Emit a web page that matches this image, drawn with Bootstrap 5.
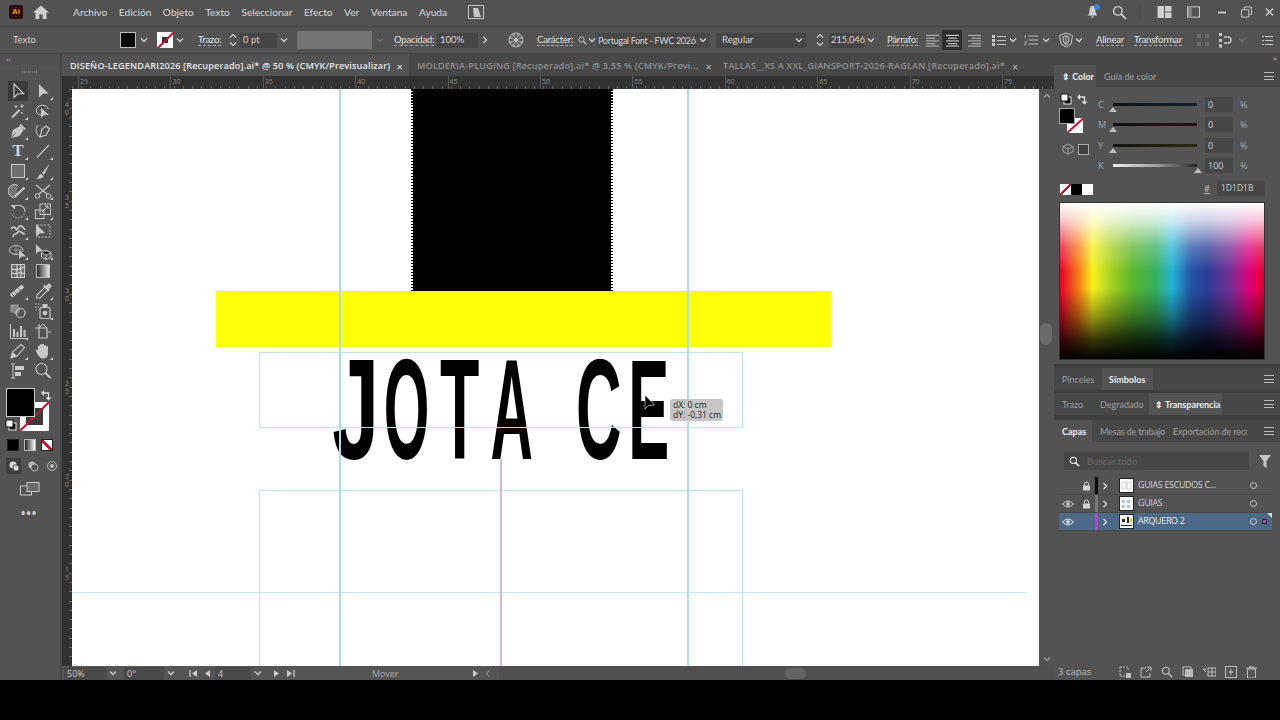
<!DOCTYPE html>
<html lang="es">
<head>
<meta charset="utf-8">
<title>Illustrator</title>
<link href="https://cdn.jsdelivr.net/npm/bootstrap@5.3.0/dist/css/bootstrap.min.css" rel="stylesheet">
<style>
html,body{margin:0;height:720px;overflow:hidden;background:#000}
body{font-family:"Open Sans","Noto Sans",sans-serif;color:#d2d2d2;font-size:10px;line-height:1}
svg{display:block;flex:none}
.ai-app{width:1280px;height:680px;background:#535353;display:flex;flex-direction:column}
.ai-foot{height:40px;background:#000}
/* menu */
.ai-menu{height:27px;flex:none;display:flex;align-items:center;border-bottom:1px solid #454545;background:#525252;position:relative;padding-bottom:2px}
.ai-logo{width:14px;height:14px;margin-left:9px;background:#2e0a04;border-radius:2px;color:#ff9a00;font:700 8px/14px "Liberation Sans",sans-serif;text-align:center;flex:none}
.ai-home{margin-left:10px;color:#d0d0d0}
.ai-menu-list{display:flex;gap:11.5px;margin-left:24px;font:400 10.2px/1 Lato,sans-serif;color:#d8d8d8;white-space:nowrap}
.ai-menu-ico{margin-left:21px}
.ai-menu-right{margin-left:auto;display:flex;align-items:center;color:#d0d0d0}
.ai-bell{position:relative}
.ai-dot{position:absolute;right:-2px;top:-1px;width:6px;height:6px;border-radius:50%;background:#3a86d8}
.mr-6{margin-right:6px}.mr-12{margin-right:12px}.mr-13{margin-right:13px}.mr-14{margin-right:14px}.mr-15{margin-right:15px}.mr-17{margin-right:17px}.mr-18{margin-right:18px}
.ai-sep{width:1px;height:20px;background:#484848}
/* options: the bar is one row of fixed tracks */
.ai-opts{height:27px;flex:none;display:grid;align-items:center;justify-items:start;padding-left:13px;grid-template-columns:107px 19px 18px 18px 23px 30px 12px 39px 18px 78px 19px 43px 43px 28px 29px 41px 9px 10px 119px 99px 14px 37px 21px 35px 20px 22px 28px 16px 16px 17px 17px 16px 22px 38px 62px 22px 19px 25px 18px;background:#535353;border-bottom:1px solid #3f3f3f;white-space:nowrap;font:400 9.5px/1 Lato,sans-serif}
.ai-lbl{color:#e0e0e0;border-bottom:1px dashed #aaa;line-height:11px;letter-spacing:-.2px}
.ai-box{height:15px;background:#454545;color:#d6d6d6;display:flex;align-items:center;padding-left:3px;flex:none}
.ai-chev{width:10px;height:10px;color:#d0d0d0}
.ai-swf{width:16px;height:16px;background:#000;border:1px solid #bdbdbd}
.ai-sws{width:16px;height:16px;background:#fff;position:relative;overflow:hidden}
.ai-sws::before{content:"";position:absolute;left:5px;top:5px;width:6px;height:6px;background:#333}
.ai-sws::after{content:"";position:absolute;left:-3px;top:7px;width:24px;height:2px;background:#c4122f;transform:rotate(-45deg)}
.x4{margin-left:4px}.x2{margin-left:2px}.x6{margin-left:6px}.x13{margin-left:13px}.x10{margin-left:10px}.x3{margin-left:3px}.x5{margin-left:5px}
.w36{width:37px}.w42{width:41px}.w134{width:113px;padding-left:1px;justify-content:space-between;padding-right:2px;letter-spacing:-.3px;font-size:9px;background:#484848}.w90{width:90px;padding-left:6px;justify-content:space-between;padding-right:2px}.w33{width:35px;padding-left:2px;letter-spacing:-.2px}
.ai-gray{width:75px;height:18px;background:#757575;flex:none}
.ai-align{width:20px;height:20px;display:flex;align-items:center;justify-content:center;color:#c6c6c6}
.ai-align-on{background:#2f2f2f;color:#eee}
.ai-faint{color:#707070}
/* work */
.ai-work{flex:1;display:flex;min-height:0}
.ai-tools{width:62px;flex:none;background:#535353;border-right:2px solid #454545;position:relative}
.ai-tools-head{height:11px;font-size:8px;color:#bbb;padding:1px 0 0 6px;background:#505050}
.ai-grip{height:14px;margin:0 4px;display:flex;align-items:center;justify-content:center}
.ai-grip i{display:block;width:16px;height:2px;background:repeating-linear-gradient(90deg,#777 0 1px,transparent 1px 2px)}
.ai-tgrid{display:grid;grid-template-columns:20px 20px;grid-auto-rows:20px;column-gap:5px;margin:2px 0 0 8px;color:#c8c8c8}
.ai-tcell{display:flex;align-items:center;justify-content:center;position:relative}
.ai-t-on{background:#3a3a3a;border-radius:1px}
.ai-t-flyout::after{content:"";position:absolute;right:0;bottom:1px;border-left:3px solid transparent;border-bottom:3px solid #cfcfcf}
.ai-tT{font:700 17px/20px "Liberation Serif",serif;color:#d4d4d4}
.ai-colorwell{position:relative;height:45px;margin-top:7px}
.ai-fw-stroke{position:absolute;left:20px;top:14px;width:29px;height:29px;background:#fff;overflow:hidden}
.ai-fw-stroke::before{content:"";position:absolute;left:6px;top:6px;width:17px;height:17px;background:#3a3a3a}
.ai-fw-stroke::after{content:"";position:absolute;left:-6px;top:13px;width:42px;height:2px;background:#c4122f;transform:rotate(-45deg)}
.ai-fw-fill{position:absolute;left:6px;top:0;width:29px;height:29px;background:#000;border:1px solid #c9c9c9}
.ai-fw-swap{position:absolute;left:40px;top:1px;color:#ddd}
.ai-fw-def{position:absolute;left:5px;top:31px;color:#eee}
.ai-modes{display:flex;gap:5px;margin:6px 0 0 7px}
.ai-mode{width:12px;height:12px;border:1px solid #222}
.ai-m-k{background:#000}.ai-m-g{background:linear-gradient(90deg,#222,#fff);border-color:#bbb}
.ai-m-n{background:linear-gradient(45deg,#fff 40%,#c4122f 40% 60%,#fff 60%);border-color:#222}
.ai-views{display:flex;gap:4px;margin:7px 0 0 6px;color:#bbb}
.ai-vw{width:16px;height:16px;display:flex;align-items:center;justify-content:center}
.ai-vw-on{background:#3f3f3f;color:#ddd}
.ai-scr{margin:8px 0 0 20px;color:#c8c8c8}
.ai-more{text-align:center;margin-top:12px;color:#ccc;font-weight:700;font-size:12px;letter-spacing:1px;padding-right:2px}
/* center */
.ai-center{width:992px;flex:none;display:flex;flex-direction:column}
.ai-tabs{height:22px;flex:none;display:flex;background:#474747;font-weight:600;font-size:9.1px;white-space:nowrap}
.ai-tab{display:flex;align-items:center;color:#909090;letter-spacing:.18px;padding-top:2px}
.ai-tab b{font-weight:400;margin-left:7px;color:#bbb;font-size:11px}
.ai-tab-on{background:#535353;color:#e6e6e6;width:347px;padding-left:8px;letter-spacing:.15px}
.ai-tab-on b{color:#eee;margin-left:6px}
.ai-tab-2{margin-left:8px}.ai-tab-3{margin-left:11px}
.ai-hruler{height:13px;flex:none;background:#323232;display:flex;position:relative;padding-left:18px;color:#8c8c8c;font-size:7px}
.ai-hruler::after{content:"";position:absolute;left:10px;right:0;bottom:0;height:3px;background:repeating-linear-gradient(90deg,#666 0 1px,transparent 1px 9.24px)}
.ai-hruler span{flex:0 0 92.4px;padding-top:2px;position:relative}
.ai-hruler span::before{content:"";position:absolute;left:-2px;top:0;bottom:0;width:1px;background:#5a5a5a}
.ai-body{flex:1;display:flex;min-height:0}
.ai-vruler{width:10px;flex:none;background:#323232;color:#8c8c8c;font-size:7px;line-height:7.5px;text-align:center;padding-top:12px;position:relative;overflow:hidden}
.ai-vruler span{display:block;height:93px}
.ai-vruler::after{content:"";position:absolute;top:0;bottom:0;right:0;width:3px;background:repeating-linear-gradient(#666 0 1px,transparent 1px 9.3px)}
.ai-canvas{width:967px;flex:none;background:#fff;position:relative;overflow:hidden}
.ai-black{position:absolute;left:340px;top:0;width:200px;height:202px;background:#000}
.ai-black::before,.ai-black::after{content:"";position:absolute;top:0;bottom:0;width:2px;background:repeating-linear-gradient(#000 0 1.5px,#fff 1.5px 3px)}
.ai-black::before{left:-1px}.ai-black::after{right:-1px}
.ai-yellow{position:absolute;left:144px;top:202px;width:615px;height:56px;background:#ffff0a}
.ai-jc{position:absolute;left:258px;top:236px;height:170px;display:flex;font:700 143px/170px "Liberation Sans",sans-serif;color:#000}
.ai-sl{width:52px;display:flex;justify-content:center;flex:none}
.ai-sl span{display:block;flex:none}
.l-j{transform:scaleX(.59)}.l-o{transform:scaleX(.41)}.l-t{transform:scaleX(.45)}.l-a{transform:scaleX(.41)}.l-c{transform:scaleX(.44)}.l-e{transform:scaleX(.43)}
.s-o{margin-left:-1px}.s-t{margin-left:.5px}.s-c{margin-left:35.5px}.s-e{margin-left:-2px}
.ai-gv{position:absolute;top:0;bottom:0;width:2px;background:#a9dfea}
.g1{left:267px}.g2{left:615px}
.ai-gh{position:absolute;left:0;top:503px;width:955px;height:1px;background:#c3e7ee}
.ai-grect{position:absolute;left:187px;width:484px;border:1px solid #bfe3ea}
.r1{top:263px;height:76px}.r2{top:401px;height:190px}
.ai-gm{position:absolute;left:428px;top:369px;bottom:0;width:2px;background:#d9b3d9}
.ai-tip{position:absolute;left:598px;top:310px;width:53px;height:22px;background:#c6c6c6;border-radius:3px;color:#222;font-size:8.5px;line-height:10px;padding:1px 3px;white-space:nowrap}
.ai-cur{position:absolute;left:572px;top:306px}
.ai-vscroll{width:15px;flex:none;background:#535353;position:relative;display:flex;flex-direction:column;align-items:center;justify-content:space-between;color:#999;padding:2px 0}
.ai-vthumb{position:absolute;left:1px;top:234px;width:12px;height:22px;background:#6b6b6b;border-radius:6px}
.ai-status{height:14px;flex:none;display:flex;align-items:center;background:#555;padding-left:2px;color:#c8c8c8;font-size:9px;white-space:nowrap}
.ai-sbox{height:13px;background:#4a4a4a;display:flex;align-items:center;padding:1px 0 0 3px;flex:none}
.w42b{width:42px}.w40b{width:40px}.w32b{width:36px}
.ai-mover{margin-left:77px;width:100px;color:#a8a8a8;padding-top:1px}
.ai-hscroll{margin-left:8px;flex:1;height:100%;position:relative;background:#505050}
.ai-hthumb{position:absolute;left:286px;top:2px;width:21px;height:11px;background:#636363;border-radius:5px}
/* panels */
.ai-panels{width:226px;flex:none;background:#3f3f3f;display:flex;flex-direction:column}
.ai-pstrip{height:11px;flex:none;background:#474747;color:#bbb;font-size:8px;text-align:right;padding-right:3px}
.ai-ptabs{display:flex;height:22px;flex:none;background:#474747;align-items:stretch;font:400 9px/1 Lato,sans-serif;color:#a0a0a0;white-space:nowrap;position:relative}
.ai-ptab{display:flex;align-items:center;padding-left:8px;flex:none}
.ai-ptab-on{background:#535353;color:#ededed;font-weight:700}
.t42{width:42px}.t67{width:67px}.t48{width:48px}.t51{width:51px;padding-left:7px}.t46{width:46px}.t49{width:49px;padding-left:0}.t73{width:73px;padding-left:6px}.t38{width:38px}.t71{width:71px;letter-spacing:-.15px}.t82{width:82px;padding-left:10px;letter-spacing:-.1px}
.ai-ham{position:absolute;right:6px;top:7px;width:10px;height:8px;border-top:1px solid #bbb;border-bottom:1px solid #bbb}
.ai-ham::after{content:"";display:block;height:1px;background:#bbb;margin-top:2.5px}
.ai-pcolor{height:278px;flex:none;background:#535353;position:relative;border-bottom:1px solid #3a3a3a}
.ai-cfill{position:absolute;left:5px;top:21px;width:16px;height:16px;background:#000;border:1px solid #aaa;z-index:1}
.ai-cstroke{position:absolute;left:13px;top:31px;width:16px;height:15px;background:#fff;overflow:hidden}
.ai-cstroke::after{content:"";position:absolute;left:-4px;top:6px;width:26px;height:2px;background:#c4122f;transform:rotate(-42deg)}
.ai-cdef{position:absolute;left:6px;top:6px;color:#eee}
.ai-cswap{position:absolute;left:22px;top:6px;color:#ddd}
.ai-ccube{position:absolute;left:8px;top:56px;color:#aaa}
.ai-csq{position:absolute;left:24px;top:57px;width:11px;height:11px;background:#3f3f3f;border:1px solid #aaa}
.ai-sliders{position:absolute;left:0;top:7px;width:100%}
.ai-srow{height:20.5px;display:flex;align-items:center;position:relative;color:#a8a8a8;font-size:9px}
.ai-sname{width:59px;padding-left:44px;flex:none}
.ai-strack{width:84px;height:3px;flex:none;background:#222;position:relative}
.tk-c{background:linear-gradient(90deg,#111,#14222c)}.tk-m{background:linear-gradient(90deg,#111,#2c1018)}.tk-y{background:linear-gradient(90deg,#111,#2a2a10)}.tk-k{background:linear-gradient(90deg,#eee,#999 55%,#222)}
.ai-thumb{position:absolute;left:-4px;top:4px;width:0;height:0;border-left:4px solid transparent;border-right:4px solid transparent;border-bottom:5px solid #c0c0c0}
.ai-thumb-r{left:auto;right:-5px}
.ai-sinp{margin-left:8px;width:28px;height:15px;background:#474747;color:#d0d0d0;display:flex;align-items:center;padding-left:3px;flex:none}
.ai-pct{margin-left:7px}
.ai-swrow{position:absolute;left:6px;top:97px;display:flex}
.ai-sw10{width:11px;height:11px}
.sw-n{background:linear-gradient(135deg,#fff 42%,#c4122f 42% 58%,#fff 58%)}.sw-k{background:#000}.sw-w{background:#fff}
.ai-hash{position:absolute;left:150px;top:97px;color:#c0c0c0;font-size:9px;border-bottom:1px dashed #aaa}
.ai-hex{position:absolute;left:163px;top:94px;width:48px;height:15px;background:#474747;color:#cfcfcf;font-size:8.5px;display:flex;align-items:center;padding-left:4px}
.ai-spectrum{position:absolute;left:6px;top:116px;width:204px;height:156px;outline:1px solid #333;
background:linear-gradient(180deg,#fff 0,rgba(255,255,255,.75) 12%,rgba(255,255,255,.25) 28%,rgba(255,255,255,0) 44%,rgba(0,0,0,0) 55%,rgba(0,0,0,.35) 72%,rgba(0,0,0,.78) 88%,#000 100%),linear-gradient(90deg,#e8002a 0,#f47a14 9%,#f6f01a 16%,#9ccd22 26%,#58b52e 36%,#35b060 47%,#22b4d8 55%,#2456a8 64%,#2c3c98 72%,#7a2c94 84%,#e0007a 93%,#e4002a 100%)}
.ai-pgap{height:3px;flex:none}
.ai-pgap5{height:5px;flex:none}
.ai-player{flex:1;background:#535353;position:relative;min-height:0}
.ai-lsearch{position:absolute;left:10px;top:10px;width:185px;height:18px;background:#474747;display:flex;align-items:center;padding-left:5px;color:#6b6b6b;font-size:9px;gap:7px}
.ai-lfilter{position:absolute;left:205px;top:13px;color:#c8c8c8}
.ai-lrows{position:absolute;left:5px;top:35px;width:213px}
.ai-lrow{height:18px;display:flex;align-items:center;position:relative;color:#d4d4d4;font-size:8.8px;border-bottom:1px solid #484848;white-space:nowrap}
.ai-lrow-on{background:#4c6a85;color:#e8edf2}
.ai-leye{width:18px;flex:none;display:flex;justify-content:center}
.ai-llock{width:18px;flex:none;display:flex;justify-content:center}
.ai-lbar{width:3px;height:100%;flex:none}
.b-k{background:#000}.b-g{background:#7a7a7a}.b-m{background:#c03ed0}
.ai-larr{width:14px;flex:none;display:flex;justify-content:center;color:#ddd}
.ai-lth{width:15px;height:15px;background:#fff;border:1px solid #222;margin-left:7px;flex:none;display:block}
.ai-lname{margin-left:4px;width:107px;flex:none;letter-spacing:-.25px}
.ai-lcirc{width:7px;height:7px;border:1px solid #ccc;border-radius:50%;flex:none;margin-left:5px}
.ai-lsel{width:5px;height:5px;background:#c03ed0;margin-left:5px;flex:none;border:1px solid #22223a}
.ai-lcorner{position:absolute;right:0;top:0;border-left:5px solid transparent;border-top:5px solid #d8d8d8}
.ai-lfoot{position:absolute;left:0;right:0;bottom:0;height:17px;display:flex;align-items:center;color:#bdbdbd;padding-left:4px;font-size:9.5px}
.ai-lfic{margin-left:auto;display:flex;gap:9px;padding-right:23px}
</style>
</head>
<body>
<svg width="0" height="0" class="position-absolute">
<defs>
<symbol id="chev" viewBox="0 0 10 10"><path d="M2 3.500 5 6.500 8 3.500" fill="none" stroke="currentColor" stroke-width="1.300"/></symbol>
<symbol id="chr" viewBox="0 0 10 10"><path d="M3.500 2 6.500 5 3.500 8" fill="none" stroke="currentColor" stroke-width="1.300"/></symbol>
<symbol id="spin" viewBox="0 0 10 16"><path d="M2 5.500 5 2.500 8 5.500M2 10.500 5 13.500 8 10.500" fill="none" stroke="currentColor" stroke-width="1.100"/></symbol>
<symbol id="al" viewBox="0 0 16 14"><path d="M1 1.500H15M1 4.500H11M1 7.500H15M1 10.500H11M1 13H15" stroke="currentColor"/></symbol>
<symbol id="ac" viewBox="0 0 16 14"><path d="M1 1.500H15M3 4.500H13M1 7.500H15M3 10.500H13M1 13H15" stroke="currentColor"/></symbol>
<symbol id="ar" viewBox="0 0 16 14"><path d="M1 1.500H15M5 4.500H15M1 7.500H15M5 10.500H15M1 13H15" stroke="currentColor"/></symbol>
<symbol id="mag" viewBox="0 0 14 14"><circle cx="5.500" cy="5.500" r="4" fill="none" stroke="currentColor" stroke-width="1.300"/><path d="M8.500 8.500 13 13" stroke="currentColor" stroke-width="1.700"/></symbol>
<symbol id="eye" viewBox="0 0 12 8"><path d="M.5 4Q6-2 11.500 4 6 10 .5 4Z" fill="none" stroke="currentColor"/><circle cx="6" cy="4" r="1.800" fill="currentColor"/></symbol>
<symbol id="lock" viewBox="0 0 9 10"><path d="M2.500 4.500V3a2 2 0 0 1 4 0V4.500" fill="none" stroke="currentColor"/><rect x="1" y="4.500" width="7" height="5" fill="currentColor"/></symbol>
<symbol id="sel" viewBox="0 0 20 20"><path d="M6 3V16.500L9.800 12.800 15.500 12.500Z" fill="none" stroke="currentColor" stroke-width="1.200"/></symbol>
<symbol id="dsel" viewBox="0 0 20 20"><path d="M6 3V16.500L9.800 12.800 15.500 12.500Z" fill="currentColor"/></symbol>
<symbol id="wand" viewBox="0 0 20 20"><path d="M4 16.500 11.500 9" stroke="currentColor" stroke-width="2"/><path d="M14 3V7M12 5H16M8 4V7M6.500 5.500H9.500M14 11V13M13 12H15" stroke="currentColor" stroke-width=".9"/></symbol>
<symbol id="lasso" viewBox="0 0 20 20"><path d="M9 14C3 14 2 9 5 6 8 3 15 4 15 8" fill="none" stroke="currentColor"/><path d="M8 7V17L11 14 16 14Z" fill="currentColor"/></symbol>
<symbol id="pen" viewBox="0 0 20 20"><path d="M3 17 5 9 12 5 15.500 9 11.500 15Z" fill="currentColor"/><path d="M12 3.500 17 8.500" stroke="currentColor" stroke-width="2"/><path d="M3.500 16.500 8 11.500" stroke="#535353"/></symbol>
<symbol id="curv" viewBox="0 0 20 20"><path d="M5 4C1 9 4 14 7 16" fill="none" stroke="currentColor"/><path d="M7 16 9 8 13 5 16.500 8 13 14Z" fill="none" stroke="currentColor" stroke-width="1.200"/></symbol>
<symbol id="line" viewBox="0 0 20 20"><path d="M4 16.500 16 4" stroke="currentColor" stroke-width="1.100"/></symbol>
<symbol id="rect" viewBox="0 0 20 20"><rect x="3.500" y="3.500" width="13" height="13" fill="#6e6e6e" stroke="currentColor"/></symbol>
<symbol id="brush" viewBox="0 0 20 20"><path d="M16.500 3 9 12 11 14Z" fill="currentColor"/><path d="M3 17.500C6 17 5.500 13.500 8 13L10.500 15C10 17.500 6 18 3 17.500Z" fill="currentColor"/></symbol>
<symbol id="shaper" viewBox="0 0 20 20"><path d="M10 4.500A6.500 6.500 0 1 0 7 16.500 L8 15" fill="#777" stroke="currentColor"/><path d="M7 15.500 16.500 6.500" stroke="currentColor" stroke-width="2.400"/></symbol>
<symbol id="sci" viewBox="0 0 20 20"><path d="M3 4 14 13M17 4 6 13" stroke="currentColor" stroke-width="1.200"/><circle cx="4.500" cy="15" r="2.300" fill="none" stroke="currentColor"/><circle cx="15.500" cy="15" r="2.300" fill="none" stroke="currentColor"/></symbol>
<symbol id="rot" viewBox="0 0 20 20"><path d="M5 6.500A7 7 0 0 1 17 10" fill="none" stroke="currentColor" stroke-width="1.100"/><path d="M2.500 4H7V8.500Z" fill="currentColor"/><path d="M17 10A7 7 0 0 1 3.500 12.500" fill="none" stroke="currentColor" stroke-dasharray="1.500 1.500"/></symbol>
<symbol id="scale" viewBox="0 0 20 20"><rect x="2.500" y="9" width="8.500" height="8.500" fill="none" stroke="currentColor"/><rect x="7" y="3" width="10.500" height="10.500" fill="none" stroke="currentColor"/><path d="M9 11 15 5M12 5H15V8" fill="none" stroke="currentColor"/></symbol>
<symbol id="warp" viewBox="0 0 20 20"><path d="M3 8C5 5 7 6 8 8S10 6 12 5 15 6 17 9M5 16C5 12 9 14 10 11S14 13 17 13" fill="none" stroke="currentColor" stroke-width="1.700"/></symbol>
<symbol id="free" viewBox="0 0 20 20"><path d="M4 4H17V16H5" fill="none" stroke="currentColor" stroke-dasharray="2 1.500"/><path d="M3 3V16L6.500 12.500 12 12Z" fill="currentColor"/></symbol>
<symbol id="sb" viewBox="0 0 20 20"><ellipse cx="8" cy="9" rx="6.500" ry="4.500" fill="none" stroke="currentColor"/><path d="M6 9 14 9M8 5V13" stroke="currentColor" stroke-width=".6"/><path d="M11 9V18L13.500 15.500 18 15.500Z" fill="currentColor"/></symbol>
<symbol id="persp" viewBox="0 0 20 20"><path d="M3 3V13L5.500 10.500 10 10Z" fill="currentColor"/><path d="M13 9 18 11.500V16L13 18.500 8.500 16V11.500Z" fill="none" stroke="currentColor"/><path d="M8.500 11.500 13 14 18 11.500M13 14V18.500" stroke="currentColor"/></symbol>
<symbol id="mesh" viewBox="0 0 20 20"><rect x="3.500" y="3.500" width="13" height="13" fill="#6e6e6e" stroke="currentColor"/><path d="M3.500 8 9 9 16.500 6M9 3.500V16.500M3.500 12C8 14 12 10 16.500 13M13 3.500C11.500 8 14.500 12 12.500 16.500" fill="none" stroke="#eee" stroke-width=".9"/></symbol>
<symbol id="gmeas" viewBox="0 0 20 20"><path d="M3 15 15 5" stroke="currentColor" stroke-width="4"/><path d="M4 13 7 16M7 10.500 10 13.500M10.500 7.500 13 10.500" stroke="#535353"/></symbol>
<symbol id="drop" viewBox="0 0 20 20"><path d="M3.500 17 4 14 12 6 15 9 7 17Z" fill="none" stroke="currentColor" stroke-width="1.100"/><path d="M11 4.500 16 9.500M13 6.500 16 3.500 17.500 5 14.500 8" stroke="currentColor" stroke-width="2"/></symbol>
<symbol id="blend" viewBox="0 0 20 20"><rect x="2.500" y="3.500" width="8" height="8" fill="#999"/><circle cx="8" cy="9" r="4" fill="#888"/><circle cx="12.500" cy="12" r="4.500" fill="none" stroke="currentColor" stroke-width="1.200"/></symbol>
<symbol id="spray" viewBox="0 0 20 20"><rect x="7" y="6.500" width="10" height="11" rx="1" fill="none" stroke="currentColor" stroke-width="1.200"/><rect x="9.500" y="3" width="5" height="3.500" fill="currentColor"/><circle cx="12" cy="12" r="2.300" fill="currentColor"/><path d="M2 3H7M2 6H6M3 9H6" stroke="currentColor" stroke-dasharray="1.500 1.500"/></symbol>
<symbol id="graph" viewBox="0 0 20 20"><path d="M2.500 3V17.500H18" fill="none" stroke="currentColor"/><path d="M6 8V16M9.500 11V16M13 5V16M16.500 9V16" stroke="currentColor" stroke-width="2"/></symbol>
<symbol id="art" viewBox="0 0 20 20"><path d="M6 3V7M2 7H6L14 7V17H6V7" fill="none" stroke="currentColor" stroke-width="1.200"/><path d="M6 7 10 3 14 7" fill="none" stroke="currentColor"/><path d="M14 11H18" stroke="currentColor"/></symbol>
<symbol id="knife" viewBox="0 0 20 20"><path d="M3 17 4.500 11 13 3.500 16.500 6.500 9 15Z" fill="none" stroke="currentColor" stroke-width="1.100"/><path d="M3 17 9 15 4.500 11Z" fill="currentColor"/></symbol>
<symbol id="hand" viewBox="0 0 20 20"><path d="M5 9V5.500a1 1 0 0 1 2 0V4a1 1 0 0 1 2 0V3.800a1 1 0 0 1 2 0V5a1 1 0 0 1 2 0V6a1 1 0 0 1 2 0V12C15 16 12.500 17.500 10 17.500 7 17.500 5.500 15 3 10.500 2.500 9 4 8.500 5 9Z" fill="currentColor"/></symbol>
<symbol id="alignt" viewBox="0 0 20 20"><path d="M5 3V17M3 3H7M3 17H7" fill="none" stroke="currentColor"/><rect x="7" y="5" width="9" height="4" fill="currentColor"/><rect x="7" y="11" width="6" height="4" fill="currentColor"/></symbol>
<symbol id="zoomt" viewBox="0 0 20 20"><circle cx="8.500" cy="8" r="5.500" fill="none" stroke="currentColor" stroke-width="1.200"/><path d="M12.500 12 17.500 17" stroke="currentColor" stroke-width="1.800"/></symbol>
<symbol id="swap" viewBox="0 0 12 12"><path d="M2 4H8.500V10" fill="none" stroke="currentColor" stroke-width="1.300"/><path d="M4 1V7L1 4ZM5.500 8.500H11.500L8.500 11.500Z" fill="currentColor"/></symbol>
<symbol id="def" viewBox="0 0 12 12"><rect x="4" y="4" width="7" height="7" fill="#111" stroke="#eee"/><rect x="1" y="1" width="7" height="7" fill="#fff" stroke="#111"/></symbol>
<symbol id="cube" viewBox="0 0 12 12"><path d="M6 1 11 3.500V8.500L6 11 1 8.500V3.500ZM1 3.500 6 6 11 3.500M6 6V11" fill="none" stroke="currentColor" stroke-width=".9"/></symbol>
<symbol id="blnd1" viewBox="0 0 12 12"><circle cx="5" cy="5" r="3.500" fill="currentColor"/><rect x="5" y="5" width="6" height="6" rx="2" fill="currentColor" stroke="#333"/></symbol>
<symbol id="blnd2" viewBox="0 0 12 12"><circle cx="5" cy="5" r="3.500" fill="currentColor"/><circle cx="7.500" cy="7.500" r="3.500" fill="#535353" stroke="currentColor"/></symbol>
<symbol id="blnd3" viewBox="0 0 12 12"><circle cx="6" cy="6" r="4.500" fill="none" stroke="currentColor"/><circle cx="6" cy="6" r="2" fill="currentColor"/></symbol>
<symbol id="scrn" viewBox="0 0 20 14"><rect x=".5" y="4" width="11" height="9" fill="none" stroke="currentColor"/><rect x="7" y=".5" width="12" height="9" fill="#6a6a6a" stroke="currentColor"/></symbol>
</defs>
</svg>

<div class="ai-app">
  <div class="ai-menu">
    <div class="ai-logo">Ai</div>
    <svg class="ai-home" width="16" height="14" viewBox="0 0 16 14"><path d="M8 .5 16 7.500H13.500V14H9.700V9.500H6.300V14H2.500V7.500H0Z" fill="currentColor"/></svg>
    <div class="ai-menu-list"><span>Archivo</span><span>Edición</span><span>Objeto</span><span>Texto</span><span>Seleccionar</span><span>Efecto</span><span>Ver</span><span>Ventana</span><span>Ayuda</span></div>
    <svg class="ai-menu-ico" width="16" height="14" viewBox="0 0 16 14"><rect x=".5" y=".5" width="15" height="13" fill="none" stroke="#c6c6c6"/><path d="M5 3 10 3 13 12H6Z" fill="#c6c6c6"/></svg>
    <div class="ai-menu-right">
      <div class="ai-bell mr-14"><svg width="11" height="14" viewBox="0 0 11 14"><path d="M5.500 1C8 1 8.500 3 8.500 6 8.500 8 9.500 9.500 10.500 10.500H.5C1.500 9.500 2.500 8 2.500 6 2.500 3 3 1 5.500 1ZM4 11.500H7L5.500 13.500Z" fill="#d0d0d0"/></svg><i class="ai-dot"></i></div>
      <svg class="mr-12" width="15" height="15"><use href="#mag"/></svg>
      <i class="ai-sep mr-17"></i>
      <svg class="mr-15" width="15" height="12" viewBox="0 0 14 12"><rect width="6.500" height="12" fill="#d0d0d0"/><rect x="7.500" width="6.500" height="5.500" fill="#d0d0d0"/><rect x="7.500" y="6.500" width="6.500" height="5.500" fill="#d0d0d0"/></svg>
      <svg class="mr-18" width="13" height="12" viewBox="0 0 14 12"><rect x=".5" y=".5" width="13" height="11" fill="none" stroke="#d0d0d0"/><rect x="1" y="1" width="4" height="10" fill="#888"/></svg>
      <svg class="mr-15" width="8" height="3" viewBox="0 0 9 3"><rect width="9" height="2" y=".5" fill="#cfcfcf"/></svg>
      <svg class="mr-13" width="11" height="12" viewBox="0 0 12 12"><path d="M3.500 3V.5H11.500V8.500H9M.5 3.500H8.500V11.500H.5Z" fill="none" stroke="#cfcfcf"/></svg>
      <svg class="mr-6" width="9" height="10" viewBox="0 0 10 10"><path d="M1 1 9 9M9 1 1 9" stroke="#cfcfcf" stroke-width="1.500"/></svg>
    </div>
  </div>

  <div class="ai-opts">
    <span>Texto</span>
    <i class="ai-swf"></i>
    <svg class="ai-chev"><use href="#chev"/></svg>
    <i class="ai-sws"></i>
    <svg class="ai-chev"><use href="#chev"/></svg>
    <span class="ai-lbl">Trazo:</span>
    <svg width="10" height="16"><use href="#spin"/></svg>
    <div class="ai-box w36">0 pt</div>
    <svg class="ai-chev"><use href="#chev"/></svg>
    <i class="ai-gray"></i>
    <svg class="ai-chev ai-faint"><use href="#chev"/></svg>
    <span class="ai-lbl">Opacidad:</span>
    <div class="ai-box w42">100%</div>
    <svg class="ai-chev"><use href="#chr"/></svg>
    <svg width="16" height="16" viewBox="0 0 16 16"><circle cx="8" cy="8" r="7" fill="#8a8a8a" stroke="#ccc"/><path d="M8 1V15M1 8H15M3 3 13 13M13 3 3 13" stroke="#444"/><circle cx="8" cy="8" r="2" fill="#ccc"/></svg>
    <span class="ai-lbl">Carácter:</span>
    <svg width="9" height="11" viewBox="0 0 14 14"><use href="#mag"/></svg>
    <svg class="ai-chev"><use href="#chev"/></svg>
    <div class="ai-box w134"><span>Portugal Font - FWC 2026</span><svg class="ai-chev"><use href="#chev"/></svg></div>
    <div class="ai-box w90"><span>Regular</span><svg class="ai-chev"><use href="#chev"/></svg></div>
    <svg width="10" height="16"><use href="#spin"/></svg>
    <div class="ai-box w33">215,046</div>
    <svg class="ai-chev"><use href="#chev"/></svg>
    <span class="ai-lbl">Párrafo:</span>
    <div class="ai-align"><svg width="15" height="13"><use href="#al"/></svg></div>
    <div class="ai-align ai-align-on"><svg width="15" height="13"><use href="#ac"/></svg></div>
    <div class="ai-align"><svg width="15" height="13"><use href="#ar"/></svg></div>
    <svg width="14" height="13" viewBox="0 0 14 13"><path d="M5 2.500H14M5 6.500H14M5 10.500H14" stroke="#c6c6c6"/><rect y="1" width="3" height="3" fill="#c6c6c6"/><rect y="5" width="3" height="3" fill="#c6c6c6"/><rect y="9" width="3" height="3" fill="#c6c6c6"/></svg>
    <svg class="ai-chev"><use href="#chev"/></svg>
    <svg width="14" height="14" viewBox="0 0 16 14"><path d="M5 2.500H16M5 7H16M5 11.500H16" stroke="#c6c6c6"/><path d="M1.500 1V5M.5 9H3L.5 12.500H3" fill="none" stroke="#c6c6c6" stroke-width=".8"/></svg>
    <svg class="ai-chev"><use href="#chev"/></svg>
    <svg width="16" height="16" viewBox="0 0 16 16"><path d="M8 1 14.500 3.500 13 12 8 15 3 12 1.500 3.500Z" fill="none" stroke="#c6c6c6"/><path d="M5 5 8 3.500 11 5 10 11 8 12.500 6 11Z" fill="none" stroke="#c6c6c6"/><path d="M8 3.500V12.500" stroke="#c6c6c6"/></svg>
    <svg class="ai-chev"><use href="#chev"/></svg>
    <span class="ai-lbl">Alinear</span>
    <span class="ai-lbl">Transformar</span>
    <svg width="14" height="14" viewBox="0 0 14 14"><path d="M1 1H5V5H1ZM9 1H13V5H9ZM1 9H5V13H1ZM9 9H13V13H9Z" fill="#6c6c6c"/></svg>
    <svg width="14" height="16" viewBox="0 0 14 16"><rect x="1" y="1" width="3" height="3" fill="#c6c6c6"/><rect x="1" y="7" width="3" height="3" fill="#c6c6c6"/><rect x="1" y="12.500" width="3" height="3" fill="#c6c6c6"/><path d="M6 5H10Q13 5 13 8T10 11H6" fill="none" stroke="#c6c6c6" stroke-width="1.400"/></svg>
    <svg class="ai-chev ai-faint"><use href="#chev"/></svg>
    <svg width="11" height="11" viewBox="0 0 11 11"><path d="M3 1.500H11M3 5.500H11M3 9.500H11" stroke="#c6c6c6"/><path d="M0 1.500H2M0 5.500H2M0 9.500H2" stroke="#c6c6c6"/></svg>
  </div>

  <div class="ai-work">
    <div class="ai-tools">
      <div class="ai-tools-head">‹‹</div>
      <div class="ai-grip"><i></i></div>
      <div class="ai-tgrid">
        <div class="ai-tcell ai-t-on"><svg width="20" height="20"><use href="#sel"/></svg></div>
        <div class="ai-tcell ai-t-flyout"><svg width="20" height="20"><use href="#dsel"/></svg></div>
        <div class="ai-tcell ai-t-flyout"><svg width="20" height="20"><use href="#wand"/></svg></div>
        <div class="ai-tcell"><svg width="20" height="20"><use href="#lasso"/></svg></div>
        <div class="ai-tcell ai-t-flyout"><svg width="20" height="20"><use href="#pen"/></svg></div>
        <div class="ai-tcell"><svg width="20" height="20"><use href="#curv"/></svg></div>
        <div class="ai-tcell ai-t-flyout"><span class="ai-tT">T</span></div>
        <div class="ai-tcell ai-t-flyout"><svg width="20" height="20"><use href="#line"/></svg></div>
        <div class="ai-tcell ai-t-flyout"><svg width="20" height="20"><use href="#rect"/></svg></div>
        <div class="ai-tcell ai-t-flyout"><svg width="20" height="20"><use href="#brush"/></svg></div>
        <div class="ai-tcell ai-t-flyout"><svg width="20" height="20"><use href="#shaper"/></svg></div>
        <div class="ai-tcell ai-t-flyout"><svg width="20" height="20"><use href="#sci"/></svg></div>
        <div class="ai-tcell ai-t-flyout"><svg width="20" height="20"><use href="#rot"/></svg></div>
        <div class="ai-tcell ai-t-flyout"><svg width="20" height="20"><use href="#scale"/></svg></div>
        <div class="ai-tcell ai-t-flyout"><svg width="20" height="20"><use href="#warp"/></svg></div>
        <div class="ai-tcell"><svg width="20" height="20"><use href="#free"/></svg></div>
        <div class="ai-tcell ai-t-flyout"><svg width="20" height="20"><use href="#sb"/></svg></div>
        <div class="ai-tcell ai-t-flyout"><svg width="20" height="20"><use href="#persp"/></svg></div>
        <div class="ai-tcell"><svg width="20" height="20"><use href="#mesh"/></svg></div>
        <div class="ai-tcell"><svg width="20" height="20" viewBox="0 0 20 20"><defs><linearGradient id="gt"><stop offset="0" stop-color="#222"/><stop offset="1" stop-color="#eee"/></linearGradient></defs><rect x="3.500" y="3.500" width="13" height="13" fill="url(#gt)" stroke="#bbb"/></svg></div>
        <div class="ai-tcell ai-t-flyout"><svg width="20" height="20"><use href="#gmeas"/></svg></div>
        <div class="ai-tcell ai-t-flyout"><svg width="20" height="20"><use href="#drop"/></svg></div>
        <div class="ai-tcell"><svg width="20" height="20"><use href="#blend"/></svg></div>
        <div class="ai-tcell ai-t-flyout"><svg width="20" height="20"><use href="#spray"/></svg></div>
        <div class="ai-tcell ai-t-flyout"><svg width="20" height="20"><use href="#graph"/></svg></div>
        <div class="ai-tcell"><svg width="20" height="20"><use href="#art"/></svg></div>
        <div class="ai-tcell ai-t-flyout"><svg width="20" height="20"><use href="#knife"/></svg></div>
        <div class="ai-tcell ai-t-flyout"><svg width="20" height="20"><use href="#hand"/></svg></div>
        <div class="ai-tcell"><svg width="20" height="20"><use href="#alignt"/></svg></div>
        <div class="ai-tcell"><svg width="20" height="20"><use href="#zoomt"/></svg></div>
      </div>
      <div class="ai-colorwell">
        <i class="ai-fw-stroke"></i><i class="ai-fw-fill"></i>
        <svg class="ai-fw-swap" width="12" height="12"><use href="#swap"/></svg>
        <svg class="ai-fw-def" width="12" height="12"><use href="#def"/></svg>
      </div>
      <div class="ai-modes"><i class="ai-mode ai-m-k"></i><i class="ai-mode ai-m-g"></i><i class="ai-mode ai-m-n"></i></div>
      <div class="ai-views">
        <div class="ai-vw ai-vw-on"><svg width="12" height="12"><use href="#blnd1"/></svg></div>
        <div class="ai-vw"><svg width="12" height="12"><use href="#blnd2"/></svg></div>
        <div class="ai-vw"><svg width="12" height="12"><use href="#blnd3"/></svg></div>
      </div>
      <svg class="ai-scr" width="20" height="14"><use href="#scrn"/></svg>
      <div class="ai-more">•••</div>
    </div>

    <div class="ai-center">
      <div class="ai-tabs">
        <div class="ai-tab ai-tab-on">DISEÑO-LEGENDARI2026 [Recuperado].ai* @ 50 % (CMYK/Previsualizar)<b>×</b></div>
        <div class="ai-tab ai-tab-2">MOLDERIA-PLUGING [Recuperado].ai* @ 3,55 % (CMYK/Previ...<b>×</b></div>
        <div class="ai-tab ai-tab-3">TALLAS__XS A XXL_GIANSPORT-2026-RAGLAN [Recuperado].ai*<b>×</b></div>
      </div>
      <div class="ai-hruler"><span>25</span><span>30</span><span>35</span><span>40</span><span>45</span><span>50</span><span>55</span><span>60</span><span>65</span><span>70</span><span>75</span></div>
      <div class="ai-body">
        <div class="ai-vruler"><span>4<br>0</span><span>3<br>5</span><span>3<br>0</span><span>2<br>5</span><span>2<br>0</span><span>1<br>5</span></div>
        <div class="ai-canvas">
          <i class="ai-black"></i>
          <i class="ai-yellow"></i>
          <div class="ai-jc">
            <div class="ai-sl"><span class="l-j">J</span></div>
            <div class="ai-sl s-o"><span class="l-o">O</span></div>
            <div class="ai-sl s-t"><span class="l-t">T</span></div>
            <div class="ai-sl"><span class="l-a">A</span></div>
            <div class="ai-sl s-c"><span class="l-c">C</span></div>
            <div class="ai-sl s-e"><span class="l-e">E</span></div>
          </div>
          <i class="ai-grect r1"></i><i class="ai-grect r2"></i>
          <i class="ai-gh"></i>
          <i class="ai-gv g1"></i><i class="ai-gv g2"></i>
          <i class="ai-gm"></i>
          <svg class="ai-cur" width="12" height="16" viewBox="0 0 12 16"><path d="M1 0V14L4.500 10.500 10.500 10Z" fill="#000" stroke="#fff" stroke-width=".6"/></svg>
          <div class="ai-tip">dX: 0 cm<br>dY: -0,31 cm</div>
        </div>
        <div class="ai-vscroll">
          <svg width="10" height="10" viewBox="0 0 10 10"><path d="M2 6.500 5 3.500 8 6.500" fill="none" stroke="currentColor" stroke-width="1.300"/></svg>
          <i class="ai-vthumb"></i>
          <svg width="10" height="10"><use href="#chev"/></svg>
        </div>
      </div>
      <div class="ai-status">
        <div class="ai-sbox w42b">50%</div>
        <svg class="ai-chev x2"><use href="#chev"/></svg>
        <div class="ai-sbox w40b x6">0°</div>
        <svg class="ai-chev x2"><use href="#chev"/></svg>
        <svg class="x13" width="9" height="9" viewBox="0 0 9 9"><path d="M1 1V8" stroke="#ccc" stroke-width="1.300"/><path d="M8 1V8L3 4.500Z" fill="#ccc"/></svg>
        <svg class="x6" width="7" height="9" viewBox="0 0 7 9"><path d="M6 1V8L1 4.500Z" fill="#ccc"/></svg>
        <div class="ai-sbox w32b x4">4</div>
        <svg class="ai-chev x2"><use href="#chev"/></svg>
        <svg class="x10" width="7" height="9" viewBox="0 0 7 9"><path d="M1 1V8L6 4.500Z" fill="#ccc"/></svg>
        <svg class="x6" width="9" height="9" viewBox="0 0 9 9"><path d="M8 1V8" stroke="#ccc" stroke-width="1.300"/><path d="M1 1V8L6 4.500Z" fill="#ccc"/></svg>
        <span class="ai-mover">Mover</span>
        <svg width="7" height="9" viewBox="0 0 7 9"><path d="M1 1V8L6 4.500Z" fill="#ccc"/></svg>
        <svg class="x6" width="6" height="9" viewBox="0 0 6 9"><path d="M5 1 1 4.500 5 8" fill="none" stroke="#999"/></svg>
        <div class="ai-hscroll"><i class="ai-hthumb"></i></div>
      </div>
    </div>

    <div class="ai-panels">
      <div class="ai-pstrip">»</div>
      <div class="ai-ptabs"><div class="ai-ptab ai-ptab-on t42">⇕ Color</div><div class="ai-ptab t67">Guía de color</div><i class="ai-ham"></i></div>
      <div class="ai-pcolor">
        <svg class="ai-cdef" width="12" height="12"><use href="#def"/></svg>
        <svg class="ai-cswap" width="12" height="12"><use href="#swap"/></svg>
        <i class="ai-cstroke"></i><i class="ai-cfill"></i>
        <svg class="ai-ccube" width="12" height="12"><use href="#cube"/></svg>
        <i class="ai-csq"></i>
        <div class="ai-sliders">
          <div class="ai-srow"><span class="ai-sname">C</span><div class="ai-strack tk-c"><i class="ai-thumb"></i></div><div class="ai-sinp">0</div><span class="ai-pct">%</span></div>
          <div class="ai-srow"><span class="ai-sname">M</span><div class="ai-strack tk-m"><i class="ai-thumb"></i></div><div class="ai-sinp">0</div><span class="ai-pct">%</span></div>
          <div class="ai-srow"><span class="ai-sname">Y</span><div class="ai-strack tk-y"><i class="ai-thumb"></i></div><div class="ai-sinp">0</div><span class="ai-pct">%</span></div>
          <div class="ai-srow"><span class="ai-sname">K</span><div class="ai-strack tk-k"><i class="ai-thumb ai-thumb-r"></i></div><div class="ai-sinp">100</div><span class="ai-pct">%</span></div>
        </div>
        <div class="ai-swrow"><i class="ai-sw10 sw-n"></i><i class="ai-sw10 sw-k"></i><i class="ai-sw10 sw-w"></i></div>
        <span class="ai-hash">#</span>
        <div class="ai-hex">1D1D1B</div>
        <div class="ai-spectrum"></div>
      </div>
      <div class="ai-pgap"></div>
      <div class="ai-ptabs"><div class="ai-ptab t48">Pinceles</div><div class="ai-ptab ai-ptab-on t51">Símbolos</div><i class="ai-ham"></i></div>
      <div class="ai-pgap"></div>
      <div class="ai-ptabs"><div class="ai-ptab t46">Trazo</div><div class="ai-ptab t49">Degradado</div><div class="ai-ptab ai-ptab-on t73">⇕ Transparencia</div><i class="ai-ham"></i></div>
      <div class="ai-pgap5"></div>
      <div class="ai-ptabs"><div class="ai-ptab ai-ptab-on t38">Capas</div><div class="ai-ptab t71">Mesas de trabajo</div><div class="ai-ptab t82">Exportación de recı</div><i class="ai-ham"></i></div>
      <div class="ai-player">
        <div class="ai-lsearch"><svg width="11" height="11" class="text-light" viewBox="0 0 14 14"><use href="#mag"/></svg><span>Buscar todo</span></div>
        <svg class="ai-lfilter" width="12" height="13" viewBox="0 0 12 13"><path d="M0 0H12L7.500 6V13L4.500 11V6Z" fill="currentColor"/></svg>
        <div class="ai-lrows">
          <div class="ai-lrow"><span class="ai-leye"></span><span class="ai-llock"><svg width="9" height="10"><use href="#lock"/></svg></span><i class="ai-lbar b-k"></i><span class="ai-larr"><svg width="10" height="10"><use href="#chr"/></svg></span><svg class="ai-lth" viewBox="0 0 13 13"><path d="M2 3H6V10H2ZM7 3H11V10H7Z" fill="none" stroke="#bbb" stroke-width=".7"/></svg><span class="ai-lname">GUIAS ESCUDOS C...</span><i class="ai-lcirc"></i></div>
          <div class="ai-lrow"><span class="ai-leye"><svg width="12" height="8"><use href="#eye"/></svg></span><span class="ai-llock"><svg width="9" height="10"><use href="#lock"/></svg></span><i class="ai-lbar b-g"></i><span class="ai-larr"><svg width="10" height="10"><use href="#chr"/></svg></span><svg class="ai-lth" viewBox="0 0 13 13"><path d="M2 3H5V6H2ZM7 3H10V6H7ZM2 8H5V11H2ZM7 8H10V11H7Z" fill="#a9c6d6"/></svg><span class="ai-lname">GUIAS</span><i class="ai-lcirc"></i></div>
          <div class="ai-lrow ai-lrow-on"><span class="ai-leye"><svg width="12" height="8"><use href="#eye"/></svg></span><span class="ai-llock"></span><i class="ai-lbar b-m"></i><span class="ai-larr"><svg width="10" height="10"><use href="#chr"/></svg></span><svg class="ai-lth" viewBox="0 0 13 13"><path d="M2 4H5V7H2ZM7 2H9V8H7ZM1 10H12V11H1Z" fill="#222"/><path d="M10 3H12V8H10Z" fill="#d8d84a"/></svg><span class="ai-lname">ARQUERO 2</span><i class="ai-lcirc"></i><i class="ai-lsel"></i><i class="ai-lcorner"></i></div>
        </div>
        <div class="ai-lfoot"><span>3 capas</span>
          <div class="ai-lfic">
            <svg width="12" height="12" viewBox="0 0 12 12"><path d="M1 1H9V5M1 1V10H6" fill="none" stroke="currentColor" stroke-dasharray="2 1"/><rect x="7" y="7" width="5" height="5" fill="currentColor"/></svg>
            <svg width="12" height="12" viewBox="0 0 12 12"><path d="M6 2H1V11H10V7M7 1H11V5M11 1 6 6" fill="none" stroke="currentColor"/></svg>
            <svg width="12" height="12" viewBox="0 0 14 14"><use href="#mag"/></svg>
            <svg width="12" height="12" viewBox="0 0 12 12"><rect x="1" y="1" width="8" height="8" fill="none" stroke="currentColor"/><rect x="3" y="3" width="8" height="8" fill="currentColor"/></svg>
            <svg width="13" height="12" viewBox="0 0 13 12"><rect x="5" y="2" width="8" height="8" fill="none" stroke="currentColor"/><path d="M9 2V10M5 6H13M0 3 3 6M0 3H3" stroke="currentColor"/></svg>
            <svg width="12" height="12" viewBox="0 0 12 12"><rect x=".5" y=".5" width="11" height="11" fill="none" stroke="currentColor"/><path d="M3 6H9M6 3V9" stroke="currentColor"/></svg>
            <svg width="11" height="12" viewBox="0 0 11 12"><path d="M0 2H11M4 2V0H7V2M1.500 3H9.500V12H1.500Z" fill="none" stroke="currentColor"/></svg>
          </div>
        </div>
      </div>
    </div>
  </div>
</div>
<div class="ai-foot"></div>
</body>
</html>
